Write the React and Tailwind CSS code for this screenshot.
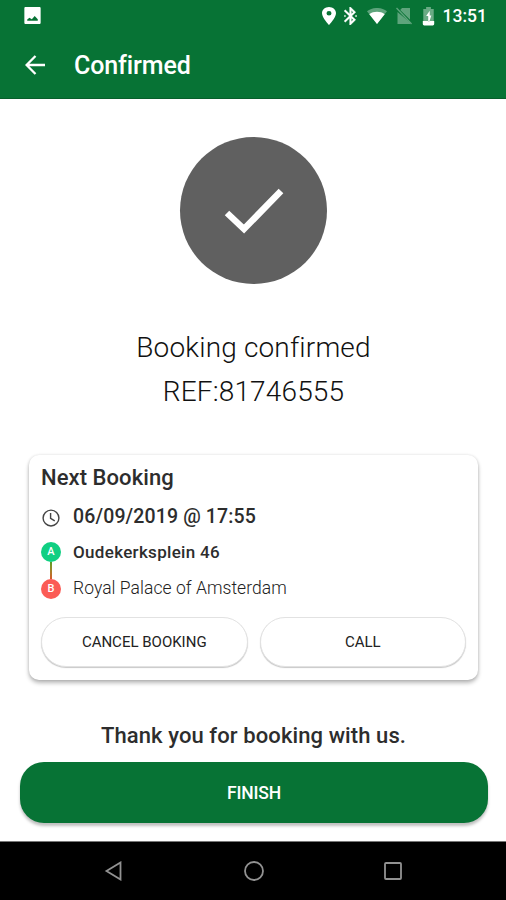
function StatusBar() {
  return (
    <div className="flex h-8 items-center justify-between pl-[20px] pr-[19px] text-white">
      <svg viewBox="0 0 24 24" className="-mt-px ml-px h-[23px] w-[23px]" fill="currentColor">
        <path d="M20.500 20V4.500c0-.8-.5-1.300-1.300-1.300H4.800c-.8 0-1.300.5-1.300 1.300V19.500c0 .8.500 1.300 1.300 1.300h14.400c.8 0 1.300-.5 1.300-1.300zM6.500 17.500v-1.200l2.300-2 2.500 1.600 3-3.400 3.200 3.400v1.600z" />
      </svg>

      <div className="flex items-center">
        <svg viewBox="0 0 14 20" className="mr-[8px] h-[18px] w-[14px]" preserveAspectRatio="none" fill="currentColor">
          <path d="M7 0C3.130 0 0 3.130 0 7c0 5.250 7 13 7 13s7-7.750 7-13c0-3.870-3.130-7-7-7zm0 9.500a2.500 2.500 0 0 1 0-5 2.500 2.500 0 0 1 0 5z" />
        </svg>
        <svg viewBox="5 2 14 20" className="mr-[10px] h-[18px] w-[13px]" preserveAspectRatio="none" fill="currentColor" stroke="currentColor" strokeWidth="0.3">
          <path d="M17.710 7.710L12 2h-1v7.590L6.410 5 5 6.410 10.590 12 5 17.590 6.410 19 11 14.410V22h1l5.710-5.710-4.300-4.290 4.300-4.290zM13 5.830l1.880 1.880L13 9.590V5.830zm1.880 10.460L13 18.170v-3.760l1.880 1.880z" />
          <circle cx="6" cy="12" r="0.9" />
          <circle cx="18" cy="12" r="0.9" />
        </svg>
        <svg viewBox="0 0 20 16" className="mr-[9px] h-4 w-5" fill="currentColor">
          <path opacity="0.35" d="M0 3.200C5.500-1.100 14.500-1.100 20 3.200L10 16z" />
          <path d="M2.300 6.200c4.400-3.200 11-3.200 15.400 0L10 16z" />
        </svg>
        <svg viewBox="0 0 16 18" className="mr-[10px] h-[18px] w-4" fill="currentColor" opacity="0.35">
          <path d="M6 1h8v11.700L4.200 3z" />
          <path d="M1.500 5L14 15.600V17H1.500z" />
          <path d="M0 1.400l1-1L16 16.600l-1 1z" />
        </svg>
        <svg viewBox="0 0 13 20" className="mr-[8px] h-[19px] w-[13px]" fill="currentColor">
          <path opacity="0.4" d="M4 0h5v2h3v13H1V2h3z" />
          <path d="M7.800 4L4 9.500h2.200V15h1.300l2-6H7.800zM0.500 14.700h12V18a1.500 1.500 0 0 1-1.500 1.500H2A1.500 1.500 0 0 1 .5 18z" />
        </svg>
        <span className="pt-[2px] text-[17.500px] font-medium leading-none">13:51</span>
      </div>
    </div>
  );
}

function CardButton({ children }) {
  return (
    <button className="h-[50px] flex-1 rounded-full border border-[#e2e2e2] bg-white pt-px text-[15px] font-normal text-[#222] shadow-[0_1px_1px_rgba(0,0,0,0.22)]">
      {children}
    </button>
  );
}

function Stop({ label, className }) {
  return (
    <span className={`flex h-5 w-5 items-center justify-center rounded-full pt-px text-[11px] font-medium text-white ${className}`}>
      {label}
    </span>
  );
}

function BookingCard() {
  return (
    <section className="ml-[29px] mt-[41px] h-[225px] w-[449px] rounded-[10px] bg-white px-3 shadow-[0_3px_4px_rgba(0,0,0,0.28),0_0_3px_rgba(0,0,0,0.12)]">
      <h2 className="pt-[9px] text-[22px] font-medium leading-7 tracking-[0.070px] text-[#2d2d2d]">Next Booking</h2>

      <div className="mt-[13px] flex h-6 items-center">
        <svg viewBox="0 0 24 24" className="mr-[12px] mt-px h-5 w-5" fill="none" stroke="#444" strokeWidth="1.700">
          <circle cx="12" cy="12" r="9.500" />
          <path d="M11.500 6v6.500l5 3" />
        </svg>
        <span className="text-[19.500px] font-medium tracking-[0.130px] text-[#2d2d2d]">06/09/2019 @ 17:55</span>
      </div>

      <div className="mt-[13px] flex">
        <div className="mr-[12px] flex w-5 flex-col items-center">
          <Stop label="A" className="bg-[#10cf82]" />
          <span className="h-[17px] w-[2px] bg-linear-to-b from-[#4f9f28] to-[#d5572c]" />
          <Stop label="B" className="bg-[#fb5b55]" />
        </div>
        <div className="flex flex-col gap-[16px] leading-5">
          <p className="text-[17px] font-medium tracking-[0.320px] text-[#2d2d2d]">Oudekerksplein 46</p>
          <p className="text-[17.500px] font-light tracking-[0.050px] text-[#222]">Royal Palace of Amsterdam</p>
        </div>
      </div>

      <div className="mt-[18px] flex gap-3">
        <CardButton>CANCEL BOOKING</CardButton>
        <CardButton>CALL</CardButton>
      </div>
    </section>
  );
}

function NavBar() {
  return (
    <nav className="mt-auto flex h-[59px] items-center justify-between border-t border-[#777] bg-black pl-[104px] pr-[103px] text-[#929292]">
      <svg viewBox="0 0 20 20" className="h-5 w-5" fill="none" stroke="currentColor" strokeWidth="1.800">
        <path d="M16.500 1.500v17L2.500 10z" />
      </svg>
      <svg viewBox="0 0 20 20" className="h-5 w-5" fill="none" stroke="currentColor" strokeWidth="1.800">
        <circle cx="10" cy="10" r="9" />
      </svg>
      <svg viewBox="0 0 20 20" className="h-5 w-5" fill="none" stroke="currentColor" strokeWidth="1.800">
        <rect x="2" y="2" width="16" height="16" rx="1" />
      </svg>
    </nav>
  );
}

export default function App() {
  return (
    <div className="flex h-[900px] w-[506px] flex-col overflow-hidden bg-white font-['Roboto',sans-serif]">
      <header className="h-[99px] border-b border-[#075f2b] bg-[#077335]">
        <StatusBar />
        <div className="flex h-[66px] items-center pl-[25px] text-white">
          <svg viewBox="0 0 20 20" className="h-5 w-5" fill="none" stroke="currentColor" strokeWidth="2.300">
            <path d="M20 10H2M10.500 1L1.600 10l8.900 9" />
          </svg>
          <h1 className="ml-[29px] pt-[2px] text-[25px] font-medium tracking-[-0.100px]">Confirmed</h1>
        </div>
      </header>

      <main className="flex flex-col">
        {/* Confirmation mark */}
        <div className="ml-[180px] mt-[38px] flex h-[147px] w-[147px] items-center justify-center rounded-full bg-[#606060]">
          <svg viewBox="0 0 60 46" className="h-[46px] w-[60px]" fill="none" stroke="#fff" strokeWidth="6.500">
            <path d="M3 25l17 16L57 3" />
          </svg>
        </div>

        <div className="mt-[42px] pl-px text-center text-[28px] font-light leading-[44px] tracking-[0.160px] text-[#111]">
          <p>Booking confirmed</p>
          <p>REF:81746555</p>
        </div>

        <BookingCard />

        <p className="mt-[42px] pl-px text-center text-[22px] font-medium leading-7 tracking-[0.100px] text-[#2d2d2d]">
          Thank you for booking with us.
        </p>
        <button className="ml-5 mt-[12px] h-[61px] w-[468px] rounded-[24px] bg-[#077335] pt-[2px] text-[17.500px] font-medium tracking-[-0.200px] text-white shadow-[0_3px_3px_rgba(0,0,0,0.25)]">
          FINISH
        </button>
      </main>

      <NavBar />
    </div>
  );
}
